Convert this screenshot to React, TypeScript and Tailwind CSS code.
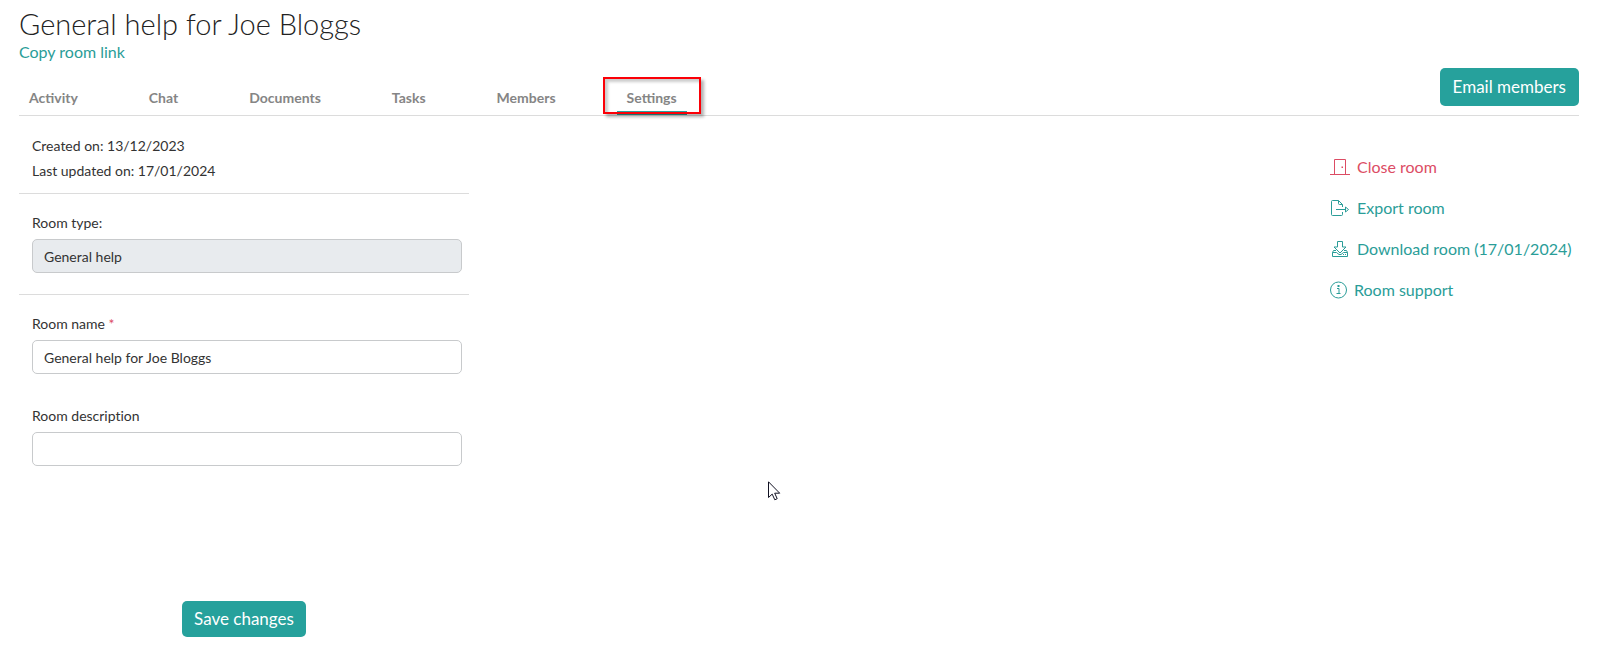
import type { ReactNode } from 'react'
import clsx from 'clsx'

const tabs = ['Activity', 'Chat', 'Documents', 'Tasks', 'Members', 'Settings']

function DoorIcon() {
  return (
    <svg className="shrink-0" width="20" height="18" viewBox="0 0 20 18" fill="none" stroke="currentColor" aria-hidden="true">
      <path d="M0 16.5h20M4.5 16.5v-15h11v15" />
      <path d="M11.5 8.5H13V10h-1.5z" fill="currentColor" stroke="none" />
    </svg>
  )
}

function ExportIcon() {
  return (
    <svg className="shrink-0" width="20" height="18" viewBox="0 0 20 18" fill="none" stroke="currentColor" strokeLinejoin="round" aria-hidden="true">
      <path d="M12.5 8V5.5l-4-4h-6a1 1 0 0 0-1 1v13a1 1 0 0 0 1 1h9a1 1 0 0 0 1-1V13" />
      <path d="M8.5 1.5v3a1 1 0 0 0 1 1h3" />
      <path d="M6 10.5h9.5M15.5 8v5l3-2.5z" />
    </svg>
  )
}

function DownloadIcon() {
  return (
    <svg className="shrink-0" width="20" height="18" viewBox="0 0 20 18" fill="none" stroke="currentColor" strokeLinejoin="round" aria-hidden="true">
      <path d="M7.5 1.5h5v5.5h3.5l-6 6-6-6h3.5z" />
      <path d="M6 10.5H3.5l-1 2v4h15v-4l-1-2H14" />
      <path d="M2.5 12.5h4l2.5 2h2l2.5-2h4M13 14.5h1M15 14.5h1" />
    </svg>
  )
}

function InfoIcon() {
  return (
    <svg className="shrink-0" width="17" height="18" viewBox="0 0 17 18" fill="none" stroke="currentColor" aria-hidden="true">
      <circle cx="8.5" cy="9" r="8" />
      <path d="M7 7.5h2v5M6.5 12.5h4" />
      <path d="M7.5 4h2v2h-2z" fill="currentColor" stroke="none" />
    </svg>
  )
}

function RoomAction({ icon, danger, children }: { icon: ReactNode; danger?: boolean; children: ReactNode }) {
  return (
    <li>
      <a href="#" className={clsx('flex items-center gap-[7px] whitespace-nowrap', danger ? 'text-[#dc4c64]' : 'text-[#2a9d98]')}>
        {icon}
        {children}
      </a>
    </li>
  )
}

interface FieldProps {
  id: string
  label: string
  value?: string
  required?: boolean
  disabled?: boolean
}

function Field({ id, label, value, required, disabled }: FieldProps) {
  return (
    <div className="pr-[7px] pl-[13px]">
      <label htmlFor={id} className="mb-[6px] block leading-5">
        {label}
        {required && <span className="text-[#dc4c64]"> *</span>}
      </label>
      <input
        id={id}
        type="text"
        defaultValue={value}
        disabled={disabled}
        className="block h-[34px] w-full rounded-[5px] border border-[#c8cacc] bg-white px-[11px] disabled:bg-[#e8ebee]"
      />
    </div>
  )
}

export default function App() {
  return (
    <main className="relative bg-white pt-[7px] pr-[41px] pl-[19px] font-['Lato',sans-serif] text-sm text-[#333]">
      <h1 className="mb-px text-[29px] leading-[34px] font-light text-[#222]">General help for Joe Bloggs</h1>
      <a href="#" className="block w-fit text-base leading-5 text-[#2a9d98]">
        Copy room link
      </a>

      <div className="mt-[6px] flex items-end justify-between border-b border-[#dcdcdc]">
        <nav className="flex gap-[51px] text-sm leading-5 font-bold text-[#858585]">
          {tabs.map((tab) => {
            const active = tab === 'Settings'
            return (
              <a
                key={tab}
                href="#"
                aria-current={active ? 'page' : undefined}
                className={clsx('relative border-b-4 px-[10px] pb-[3px]', active ? 'border-[#26a19c]' : 'border-transparent')}
              >
                {tab}
                {active && (
                  <span className="absolute -inset-x-[14px] -top-[11px] -bottom-[3px] border-2 border-[#fb0007] shadow-[3px_3px_3px_rgba(0,0,0,0.3),inset_3px_3px_3px_rgba(0,0,0,0.2)]" />
                )}
              </a>
            )
          })}
        </nav>
        <button type="button" className="mb-[9px] h-[38px] rounded-[5px] bg-[#26a19c] px-[13px] text-[17px] text-white">
          Email members
        </button>
      </div>

      <div className="flex items-start justify-between">
        <form className="w-[450px] [font-variant-ligatures:none]">
          <div className="border-b border-[#dcdcdc] px-[13px] pt-[17px] pb-[10px] leading-[25px]">
            <p>Created on: 13/12/2023</p>
            <p>Last updated on: 17/01/2024</p>
          </div>
          <div className="border-b border-[#dcdcdc] pt-[19px] pb-[21px]">
            <Field id="room-type" label="Room type:" value="General help" disabled />
          </div>
          <div className="space-y-8 pt-[19px]">
            <Field id="room-name" label="Room name" value="General help for Joe Bloggs" required />
            <Field id="room-description" label="Room description" />
          </div>
          <div className="mt-[135px] flex justify-center">
            <button type="submit" className="h-9 rounded-[5px] bg-[#26a19c] px-3 text-[17px] text-white">
              Save changes
            </button>
          </div>
        </form>

        <ul className="mt-[41px] w-[249px] space-y-[21px] text-base leading-5">
          <RoomAction icon={<DoorIcon />} danger>
            Close room
          </RoomAction>
          <RoomAction icon={<ExportIcon />}>Export room</RoomAction>
          <RoomAction icon={<DownloadIcon />}>Download room (17/01/2024)</RoomAction>
          <RoomAction icon={<InfoIcon />}>Room support</RoomAction>
        </ul>
      </div>

      {/* mouse pointer */}
      <svg className="absolute top-[481px] left-[768px]" width="13" height="20" viewBox="0 0 13 20" aria-hidden="true">
        <path d="M.5.8v15.7l3.7-3.4 2.6 5.7 2.4-1.1-2.5-5.5h5z" fill="#fff" stroke="#111122" />
      </svg>
    </main>
  )
}
